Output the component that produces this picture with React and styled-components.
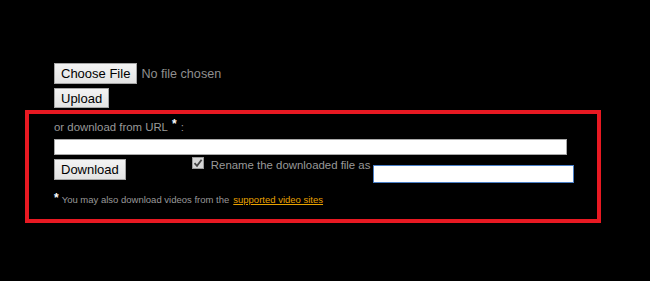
import React from "react";
import styled, { createGlobalStyle } from "styled-components";

const GlobalStyle = createGlobalStyle`
  html, body {
    margin: 0;
    padding: 0;
    background: #000;
  }
  body {
    font-family: "Liberation Sans", Arial, sans-serif;
    color: #999;
  }
`;

const Page = styled.div`
  width: 650px;
  height: 281px;
  padding-top: 63px;
  box-sizing: border-box;
`;

const UploadForm = styled.div`
  display: flex;
  flex-direction: column;
  align-items: flex-start;
  gap: 4px;
  padding-left: 54px;
`;

const FileRow = styled.div`
  display: flex;
  align-items: center;
  gap: 4px;
`;

const FileStatus = styled.span`
  font-size: 12.6px;
  color: #8f8f8f;
`;

const Button = styled.button`
  font-family: "Liberation Sans", Arial, sans-serif;
  font-size: 13px;
  color: #000;
  height: ${(p) => p.$h || 20}px;
  padding: 0 6px;
  background: linear-gradient(#f3f3f3, #e3e3e3);
  border: 1px solid #a6a6a6;
  border-radius: 0;
  line-height: 1;
  cursor: pointer;
`;

const RedBox = styled.div`
  margin: 2px 0 0 25px;
  width: 576px;
  height: 113px;
  box-sizing: border-box;
  border: 4px solid #e81922;
  padding: 7px 0 0 25px;
  display: flex;
  flex-direction: column;
  align-items: flex-start;
`;

const Label = styled.div`
  font-size: 11.4px;
  color: #999;
  height: 18px;
`;

const Star = styled.sup`
  color: #fff;
  font-weight: bold;
  font-size: 12px;
  margin: 0 4px 0 4px;
  vertical-align: 3px;
  line-height: 0;
`;

const TextInput = styled.input`
  box-sizing: border-box;
  width: ${(p) => p.$w}px;
  height: ${(p) => p.$h}px;
  background: #fff;
  border: 1px solid ${(p) => (p.$focus ? "#4a7fc7" : "#a9a9a9")};
  padding: 0;
  outline: none;
`;

const ActionRow = styled.div`
  display: flex;
  align-items: flex-start;
  margin-top: 4px;
`;

const RenameGroup = styled.label`
  display: flex;
  align-items: center;
  margin-left: 66px;
  font-size: 11.4px;
  color: #999;
  gap: 7px;
`;

const CheckBox = styled.span`
  width: 12px;
  height: 12px;
  box-sizing: border-box;
  background: #d6d6d6;
  border: 1px solid #9a9a9a;
  display: flex;
  align-items: center;
  justify-content: center;
  margin-top: -4px;
`;

const RenameInput = styled(TextInput)`
  margin-left: 3px;
  margin-top: 6px;
`;

const Note = styled.div`
  margin-top: 11px;
  font-size: 9.5px;
  color: #999;
  display: flex;
  align-items: flex-start;
`;

const NoteStar = styled.span`
  color: #fff;
  font-size: 12px;
  font-weight: bold;
  margin: -3px 3px 0 0;
`;

const SiteLink = styled.a`
  color: #e8a200;
  text-decoration: underline;
  margin-left: 4px;
`;

export default function App() {
  return (
    <Page>
      <GlobalStyle />
      <UploadForm>
        <FileRow>
          <Button $h={21}>Choose File</Button>
          <FileStatus>No file chosen</FileStatus>
        </FileRow>
        <Button>Upload</Button>
      </UploadForm>
      <RedBox>
        <Label>
          or download from URL<Star>*</Star>:
        </Label>
        <TextInput $w={513} $h={16} />
        <ActionRow>
          <Button $h={21}>Download</Button>
          <RenameGroup>
            <CheckBox>
              <svg width="10" height="10" viewBox="0 0 10 10">
                <path d="M1.5 5.2 L4 7.8 L8.6 1.8" fill="none" stroke="#444" strokeWidth="1.8" />
              </svg>
            </CheckBox>
            <span>Rename the downloaded file as</span>
          </RenameGroup>
          <RenameInput $w={201} $h={18} $focus />
        </ActionRow>
        <Note>
          <NoteStar>*</NoteStar>
          <span>You may also download videos from the</span>
          <SiteLink href="#">supported video sites</SiteLink>
        </Note>
      </RedBox>
    </Page>
  );
}
